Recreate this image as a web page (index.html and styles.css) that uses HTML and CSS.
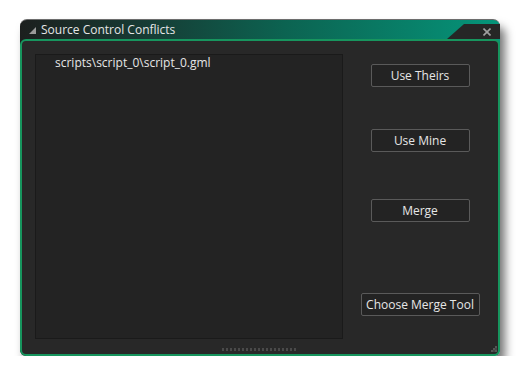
FILE: index.html
```html
<!DOCTYPE html>
<html lang="en">
<head>
  <meta charset="UTF-8">
  <title>Source Control Conflicts</title>
  <link rel="stylesheet" href="styles.css">
</head>
<body>
  <div class="window">
    <!-- Title bar -->
    <div class="titlebar">
      <svg class="collapse" width="7" height="7" viewBox="0 0 7 7"><polygon points="7,0 7,7 0,7" fill="#9a9a9a"/></svg>
      <span class="title">Source Control Conflicts</span>
      <div class="notch">
        <svg class="close" width="8" height="8" viewBox="0 0 8 8">
          <line x1="0.5" y1="0.5" x2="7.5" y2="7.5" stroke="#a0a0a0" stroke-width="1.6"/>
          <line x1="7.5" y1="0.5" x2="0.5" y2="7.5" stroke="#a0a0a0" stroke-width="1.6"/>
        </svg>
      </div>
    </div>

    <!-- Window body -->
    <div class="panel">
      <div class="content">
        <div class="filelist">
          <div class="file">scripts\script_0\script_0.gml</div>
        </div>
        <div class="actions">
          <button class="btn theirs">Use Theirs</button>
          <button class="btn mine">Use Mine</button>
          <button class="btn merge">Merge</button>
          <button class="btn tool">Choose Merge Tool</button>
        </div>
      </div>
      <div class="gripper"></div>
      <svg class="resize" width="7" height="7" viewBox="0 0 7 7">
        <rect x="5" y="0" width="2" height="2" fill="#555"/>
        <rect x="3" y="2" width="2" height="2" fill="#555"/>
        <rect x="5" y="2" width="2" height="2" fill="#444"/>
        <rect x="1" y="4" width="2" height="2" fill="#555"/>
        <rect x="3" y="4" width="2" height="2" fill="#444"/>
        <rect x="5" y="4" width="2" height="2" fill="#555"/>
      </svg>
    </div>
  </div>
</body>
</html>
```

FILE: styles.css
```css
body {
  margin: 0;
  padding: 19px 0 0 20px;
  background-color: white;
  font-family: 'Open Sans', 'Liberation Sans', sans-serif;
}
.window {
  width: 480px;
  height: 337px;
  display: flex;
  flex-direction: column;
  background: linear-gradient(90deg, #1c1f1e 0%, #173a33 25%, #0c6351 55%, #05957a 100%);
  border-radius: 7px 7px 6px 6px;
  box-shadow: 5px 8px 10px rgba(0, 0, 0, 0.55);
  border-top: 1px solid #6d6d6d;
  box-sizing: border-box;
}
.titlebar {
  height: 19px;
  display: flex;
  align-items: center;
  flex-shrink: 0;
}
.collapse {
  margin: 1px 0 0 9px;
}
.title {
  margin-left: 5px;
  font-size: 12px;
  color: #e6e6e6;
  flex: 1;
}
.notch {
  align-self: flex-end;
  width: 53px;
  height: 15px;
  background-color: #262626;
  clip-path: polygon(17px 0, 100% 0, 100% 100%, 0 100%);
  display: flex;
  align-items: center;
  justify-content: flex-end;
  padding-right: 9px;
  box-sizing: border-box;
}
.panel {
  flex: 1;
  position: relative;
  background-color: #282828;
  border: 2px solid #17955e;
  border-radius: 6px;
  display: flex;
  flex-direction: column;
}
.content {
  flex: 1;
  display: flex;
  padding: 13px 0 0 13px;
}
.filelist {
  width: 306px;
  height: 283px;
  background-color: #232323;
  border: 1px solid #1a1a1a;
}
.file {
  padding: 1px 0 0 19px;
  font-size: 12px;
  color: #e6e6e6;
  line-height: 14px;
}
.actions {
  flex: 1;
  display: flex;
  flex-direction: column;
  align-items: center;
  padding-right: 1px;
}
.btn {
  height: 23px;
  width: 99px;
  background-color: #232323;
  border: 1px solid #5a5a5a;
  border-radius: 2px;
  color: #e6e6e6;
  font-family: 'Open Sans', 'Liberation Sans', sans-serif;
  font-size: 12px;
  padding: 0;
}
.theirs {
  margin-top: 10px;
}
.mine {
  margin-top: 42px;
}
.merge {
  margin-top: 47px;
}
.tool {
  margin-top: 71px;
  width: 119px;
}
.gripper {
  align-self: center;
  width: 76px;
  height: 3px;
  margin: 0 0 3px 0;
  background: repeating-linear-gradient(90deg, #4a4a4a 0 2px, transparent 2px 4px);
}
.resize {
  position: absolute;
  right: 1px;
  bottom: 1px;
}
```
